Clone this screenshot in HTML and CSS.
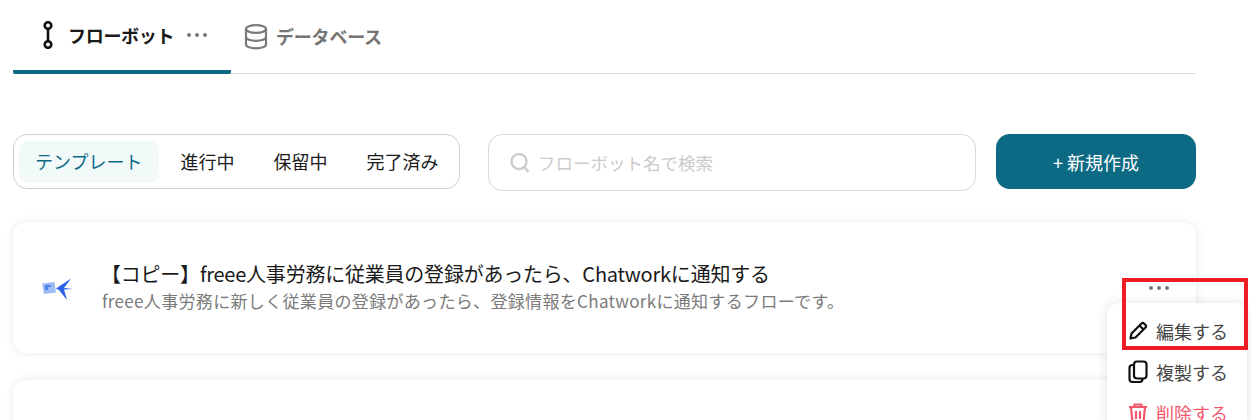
FILE: index.html
```html
<!DOCTYPE html>
<html lang="ja">
<head>
  <meta charset="UTF-8" />
  <meta name="viewport" content="width=device-width, initial-scale=1.0"/>
  <title>フローボット</title>
  <link rel="stylesheet" href="styles.css">
</head>
<body>
  <div class="container">
    <div class="tabs">
      <div class="tab tab-active">
        <svg class="tab-icon" width="12" height="28" viewBox="0 0 12 28" fill="none" stroke="#111" stroke-width="2.6">
          <circle cx="6" cy="4.500" r="3.300"/>
          <path d="M6 8v12"/>
          <circle cx="6" cy="23.500" r="3.300"/>
        </svg>
        <span class="tab-label">フローボット</span>
        <span class="tab-dots"><i></i><i></i><i></i></span>
      </div>
      <div class="tab tab-data">
        <svg class="db-icon" width="24" height="26" viewBox="0 0 24 26" fill="none" stroke="#7a7a7a" stroke-width="2.200">
          <ellipse cx="12" cy="5" rx="10" ry="3.800"/>
          <path d="M2 5v15.500c0 2.200 4.500 3.800 10 3.800s10-1.600 10-3.800V5"/>
          <path d="M2 13c0 2.200 4.500 3.800 10 3.800s10-1.600 10-3.800"/>
        </svg>
        <span class="tab-label">データベース</span>
      </div>
    </div>

    <div class="toolbar">
      <div class="filters">
        <div class="filter filter-active">テンプレート</div>
        <div class="filter">進行中</div>
        <div class="filter">保留中</div>
        <div class="filter">完了済み</div>
      </div>
      <div class="search">
        <svg width="22" height="22" viewBox="0 0 22 22" fill="none" stroke="#cccccc" stroke-width="2.400">
          <circle cx="10" cy="9.500" r="7.500"/>
          <path d="M15.500 15l4 5"/>
        </svg>
        <span>フローボット名で検索</span>
      </div>
      <button class="new-btn">+ 新規作成</button>
    </div>

    <div class="card">
      <svg class="card-logo" width="32" height="24" viewBox="0 0 32 24">
        <path d="M0 7.500L12.500 6l1.500 10.500L2 18z" fill="#9dbcf5"/>
        <path d="M3 9h6v2H6v3H3z" fill="#4f82ee"/>
        <path d="M14 12.500L29 2.500 22 12l9 1-9 .500L25 24l-8-10z" fill="#2a62e8"/>
      </svg>
      <div class="card-body">
        <div class="card-title">【コピー】freee人事労務に従業員の登録があったら、Chatworkに通知する</div>
        <div class="card-desc">freee人事労務に新しく従業員の登録があったら、登録情報をChatworkに通知するフローです。</div>
      </div>
      <div class="card-dots"><i></i><i></i><i></i></div>
    </div>
    <div class="card"></div>
  </div>

  <div class="menu">
    <div class="menu-item">
      <svg width="20" height="20" viewBox="0 0 20 20" fill="none" stroke="#111" stroke-width="2.200" stroke-linejoin="round">
        <path d="M2.500 17.500l1-5L13.500 2.500a1.800 1.800 0 0 1 2.500 0l1.500 1.500a1.800 1.800 0 0 1 0 2.500L7.500 16.500z"/>
        <path d="M11.500 4.500l4 4"/>
      </svg>
      <span>編集する</span>
    </div>
    <div class="menu-item">
      <svg width="20" height="24" viewBox="0 0 20 24" fill="none" stroke="#111" stroke-width="2.200" stroke-linejoin="round">
        <rect x="6" y="1.500" width="12.500" height="17" rx="3"/>
        <path d="M6 5H4.500a3 3 0 0 0-3 3v11a3 3 0 0 0 3 3h7a3 3 0 0 0 3-3v-.500"/>
      </svg>
      <span>複製する</span>
    </div>
    <div class="menu-item menu-delete">
      <svg width="20" height="22" viewBox="0 0 20 22" fill="none" stroke="#f4566b" stroke-width="2.200" stroke-linejoin="round">
        <path d="M1 5h18M6.500 5V2.500h7V5M3 5l1.500 15.500h11L17 5M8 9v8M12 9v8"/>
      </svg>
      <span>削除する</span>
    </div>
  </div>

  <div class="highlight"></div>
</body>
</html>
```

FILE: styles.css
```css
* {
  margin: 0;
  padding: 0;
  box-sizing: border-box;
}

html, body {
  height: 420px;
  overflow: hidden;
}

body {
  font-family: "Noto Sans CJK JP", "Noto Sans", sans-serif;
  background-color: #fff;
  color: #1a1a1a;
  position: relative;
}

.container {
  width: 1196px;
  padding-left: 13px;
}

.tabs {
  display: flex;
  height: 74px;
  border-bottom: 1px solid #dedede;
}

.tab {
  display: flex;
  align-items: center;
  height: 74px;
  padding-bottom: 3px;
  font-size: 18px;
  font-weight: 700;
}

.tab-active {
  width: 218px;
  padding-left: 29px;
  padding-bottom: 0;
  border-bottom: 4px solid #0c6a84;
  border-radius: 0 0 2px 2px;
}

.tab-label {
  letter-spacing: -0.3px;
}

.tab-active .tab-label {
  margin-left: 14px;
}

.tab-icon {
  flex-shrink: 0;
}

.tab-dots {
  display: flex;
  gap: 4px;
  margin-left: 13px;
}

.tab-dots i, .card-dots i {
  display: block;
  width: 4px;
  height: 4px;
  border-radius: 50%;
  background-color: #777;
}

.tab-data {
  padding-left: 14px;
  gap: 8px;
  color: #757575;
}

.tab-data .tab-label {
  letter-spacing: -0.2px;
}

.db-icon {
  margin-top: 3px;
  margin-left: -1px;
}

.toolbar {
  display: flex;
  align-items: flex-start;
  margin-top: 60px;
}

.filters {
  display: flex;
  align-items: center;
  width: 447px;
  height: 55px;
  padding: 0 5px;
  border: 1px solid #cfcfcf;
  border-radius: 14px;
  font-size: 18px;
}

.filter {
  height: 42px;
  line-height: 40px;
  padding: 0 19.5px;
  white-space: nowrap;
}

.filter-active {
  flex-shrink: 0;
  width: 140px;
  margin-right: 2px;
  padding: 0 16px;
  color: #0c6a84;
  background-color: #f1f9f9;
  border-radius: 10px;
}

.search {
  display: flex;
  align-items: center;
  gap: 7px;
  width: 488px;
  height: 57px;
  margin-left: 28px;
  padding-left: 20px;
  border: 1px solid #d8d8d8;
  border-radius: 14px;
  font-size: 17.5px;
  color: #cbcbcb;
}

.new-btn {
  width: 200px;
  height: 55px;
  margin-left: 20px;
  border: none;
  border-radius: 14px;
  background-color: #0c6a84;
  color: #fff;
  font-family: inherit;
  font-size: 18px;
  font-weight: 400;
}

.card {
  position: relative;
  display: flex;
  align-items: center;
  height: 131px;
  margin-top: 31px;
  padding-left: 29px;
  border-radius: 14px;
  background-color: #fff;
  box-shadow: 0 0 10px rgba(0, 0, 0, 0.09);
}

.card + .card {
  margin-top: 27px;
}

.card-logo {
  flex-shrink: 0;
}

.card-body {
  margin-left: 27px;
  margin-top: -2px;
}

.card-title {
  font-size: 20px;
  line-height: 28px;
  letter-spacing: -0.22px;
}

.card-desc {
  margin-left: 1px;
  font-size: 17px;
  line-height: 26px;
  letter-spacing: 0.33px;
  color: #7b7b7b;
}

.card-dots {
  position: absolute;
  top: 64px;
  right: 27px;
  display: flex;
  gap: 4px;
}

.menu {
  position: absolute;
  left: 1107px;
  top: 303px;
  width: 140px;
  height: 130px;
  padding-top: 7px;
  padding-left: 21px;
  border-radius: 12px;
  background-color: #fff;
  box-shadow: 0 0 12px rgba(0, 0, 0, 0.12);
}

.menu-item {
  display: flex;
  align-items: center;
  gap: 8px;
  height: 41px;
  font-size: 18px;
  color: #444;
}

.menu-delete {
  color: #f4566b;
}

.highlight {
  position: absolute;
  left: 1122px;
  top: 278px;
  width: 126px;
  height: 72px;
  border: 4px solid #ee1c25;
}
```
